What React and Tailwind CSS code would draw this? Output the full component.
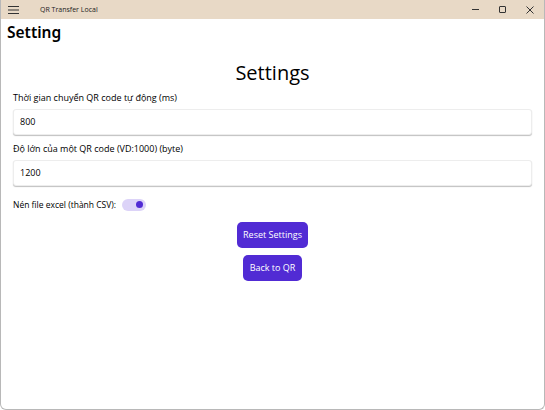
export default function App() {
  return (
    <div className="w-[545px] h-[410px] flex flex-col bg-white border border-t-0 border-[#b8b8b8] rounded-b-md overflow-hidden font-['Open_Sans',sans-serif] text-black">
      {/* Title bar */}
      <div className="h-[19px] flex items-center bg-[#e8d9c6] shrink-0">
        <svg width="12" height="10" viewBox="0 0 12 10" className="ml-[7px]">
          <path d="M0 1.5h11M0 5h11M0 8.5h11" stroke="#333" strokeWidth="1" />
        </svg>
        <span className="ml-[20px] pt-[1px] text-[7px] text-[#222]">QR Transfer Local</span>
        <div className="ml-auto mr-[1px] flex items-center h-full">
          <div className="w-[27px] flex justify-center">
            <div className="w-[7px] h-px bg-[#333]" />
          </div>
          <div className="w-[27px] flex justify-center">
            <div className="w-[7px] h-[7px] border border-[#333] rounded-[1px]" />
          </div>
          <div className="w-[27px] flex justify-center">
            <svg width="8" height="8" viewBox="0 0 8 8">
              <path d="M0.5 0.5l7 7M7.5 0.5l-7 7" stroke="#333" strokeWidth="1" />
            </svg>
          </div>
        </div>
      </div>

      {/* Nav header */}
      <div className="px-[6px] pt-[1px] h-[25px] text-[15.5px] leading-[25px] font-semibold font-['Noto_Sans',sans-serif]">
        Setting
      </div>

      <div className="flex flex-col px-[12px]">
        <h1 className="text-center text-[20px] leading-[28px] mt-[15px]">Settings</h1>

        <label className="text-[9px] leading-[13px] mt-[4px]">Thời gian chuyển QR code tự động (ms)</label>
        <div className="mt-[5px] h-[26px] flex items-center px-[6px] text-[9px] bg-white rounded-[3px] border border-[#ededed] shadow-[0_1px_1px_rgba(0,0,0,0.25)]">
          800
        </div>

        <label className="text-[9px] leading-[13px] mt-[7px]">Độ lớn của một QR code (VD:1000) (byte)</label>
        <div className="mt-[5px] h-[26px] flex items-center px-[6px] text-[9px] bg-white rounded-[3px] border border-[#ededed] shadow-[0_1px_1px_rgba(0,0,0,0.25)]">
          1200
        </div>

        <div className="mt-[12px] flex items-center gap-[6px]">
          <span className="text-[8.5px] leading-[13px]">Nén file excel (thành CSV):</span>
          <div className="w-[24px] h-[12px] rounded-full bg-[#dcd3f8] flex items-center justify-end pr-[3px]">
            <div className="w-[7px] h-[7px] rounded-full bg-[#512bd4]" />
          </div>
        </div>

        <div className="flex flex-col items-center mt-[11px] gap-[7px]">
          <button className="h-[26px] px-[6px] rounded-[5px] bg-[#512bd4] text-white text-[9px]">
            Reset Settings
          </button>
          <button className="h-[26px] px-[7px] rounded-[5px] bg-[#512bd4] text-white text-[9px]">
            Back to QR
          </button>
        </div>
      </div>
    </div>
  );
}
